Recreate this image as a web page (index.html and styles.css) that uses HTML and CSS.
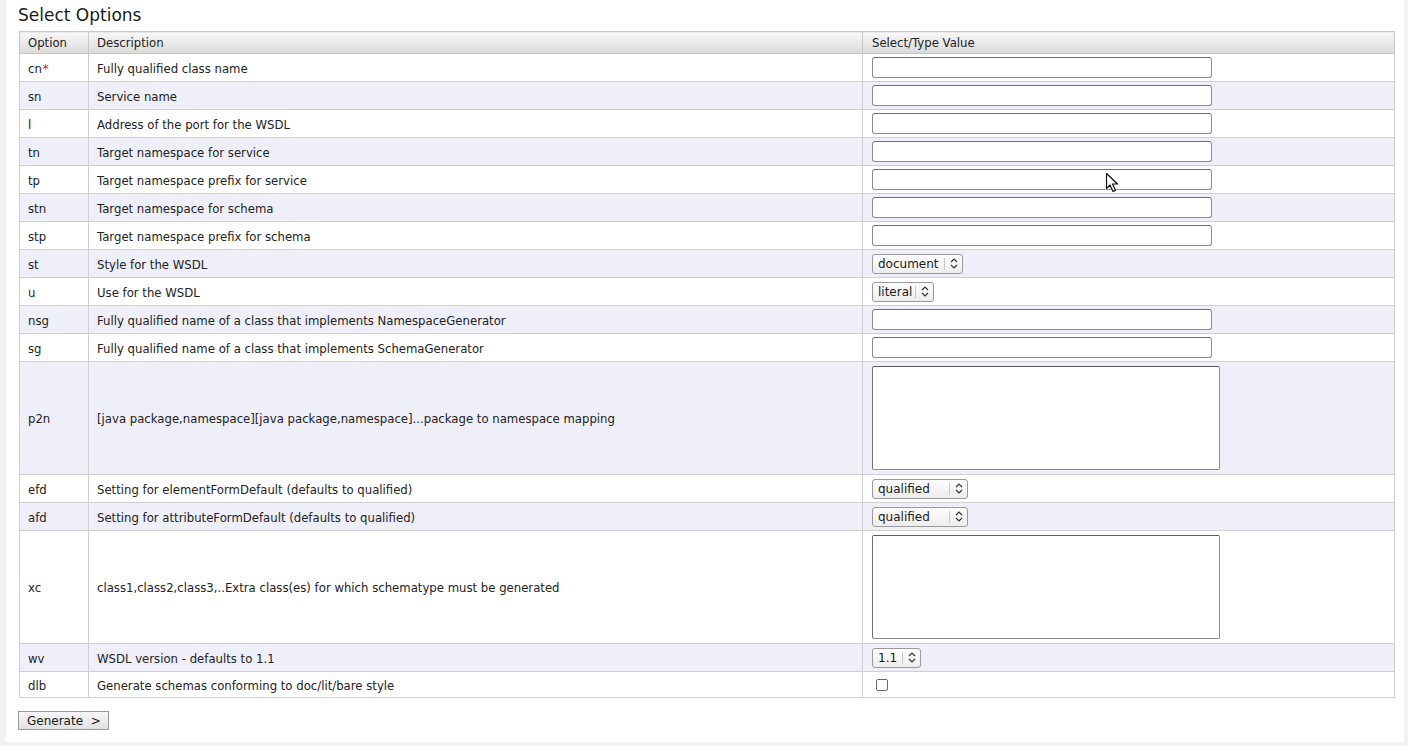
FILE: index.html
```html
<!DOCTYPE html>
<html>
<head>
<meta charset="utf-8">
<title>Select Options</title>
<link rel="stylesheet" href="styles.css">
</head>
<body>
<div class="panel">
  <h2 class="title">Select Options</h2>
  <table class="opts">
    <colgroup><col class="c-opt"><col class="c-desc"><col class="c-val"></colgroup>
    <thead>
      <tr><th>Option</th><th>Description</th><th class="val">Select/Type Value</th></tr>
    </thead>
    <tbody>
      <tr><td>cn<span class="req">*</span></td><td>Fully qualified class name</td><td class="val"><input class="txt" type="text"></td></tr>
      <tr class="alt"><td>sn</td><td>Service name</td><td class="val"><input class="txt" type="text"></td></tr>
      <tr><td>l</td><td>Address of the port for the WSDL</td><td class="val"><input class="txt" type="text"></td></tr>
      <tr class="alt"><td>tn</td><td>Target namespace for service</td><td class="val"><input class="txt" type="text"></td></tr>
      <tr><td>tp</td><td>Target namespace prefix for service</td><td class="val"><input class="txt" type="text"></td></tr>
      <tr class="alt"><td>stn</td><td>Target namespace for schema</td><td class="val"><input class="txt" type="text"></td></tr>
      <tr><td>stp</td><td>Target namespace prefix for schema</td><td class="val"><input class="txt" type="text"></td></tr>
      <tr class="alt"><td>st</td><td>Style for the WSDL</td><td class="val"><span class="sel w-doc"><span class="sel-t">document</span><span class="sel-a"><svg width="8" height="11" viewBox="0 0 8 11"><path d="M1 4 L4 1 L7 4 M1 7 L4 10 L7 7" fill="none" stroke="#333" stroke-width="1.2"/></svg></span></span></td></tr>
      <tr><td>u</td><td>Use for the WSDL</td><td class="val"><span class="sel w-lit"><span class="sel-t">literal</span><span class="sel-a"><svg width="8" height="11" viewBox="0 0 8 11"><path d="M1 4 L4 1 L7 4 M1 7 L4 10 L7 7" fill="none" stroke="#333" stroke-width="1.2"/></svg></span></span></td></tr>
      <tr class="alt"><td>nsg</td><td>Fully qualified name of a class that implements NamespaceGenerator</td><td class="val"><input class="txt" type="text"></td></tr>
      <tr><td>sg</td><td>Fully qualified name of a class that implements SchemaGenerator</td><td class="val"><input class="txt" type="text"></td></tr>
      <tr class="alt tall"><td>p2n</td><td>[java package,namespace][java package,namespace]...package to namespace mapping</td><td class="val"><textarea class="area"></textarea></td></tr>
      <tr><td>efd</td><td>Setting for elementFormDefault (defaults to qualified)</td><td class="val"><span class="sel w-q"><span class="sel-t">qualified</span><span class="sel-a"><svg width="8" height="11" viewBox="0 0 8 11"><path d="M1 4 L4 1 L7 4 M1 7 L4 10 L7 7" fill="none" stroke="#333" stroke-width="1.2"/></svg></span></span></td></tr>
      <tr class="alt"><td>afd</td><td>Setting for attributeFormDefault (defaults to qualified)</td><td class="val"><span class="sel w-q"><span class="sel-t">qualified</span><span class="sel-a"><svg width="8" height="11" viewBox="0 0 8 11"><path d="M1 4 L4 1 L7 4 M1 7 L4 10 L7 7" fill="none" stroke="#333" stroke-width="1.2"/></svg></span></span></td></tr>
      <tr class="tall"><td>xc</td><td>class1,class2,class3,..Extra class(es) for which schematype must be generated</td><td class="val"><textarea class="area"></textarea></td></tr>
      <tr class="alt"><td>wv</td><td>WSDL version - defaults to 1.1</td><td class="val"><span class="sel w-v"><span class="sel-t">1.1</span><span class="sel-a"><svg width="8" height="11" viewBox="0 0 8 11"><path d="M1 4 L4 1 L7 4 M1 7 L4 10 L7 7" fill="none" stroke="#333" stroke-width="1.2"/></svg></span></span></td></tr>
      <tr class="short"><td>dlb</td><td>Generate schemas conforming to doc/lit/bare style</td><td class="val"><span class="chk"></span></td></tr>
    </tbody>
  </table>
  <button class="gen" type="button">Generate &nbsp;&gt;</button>
</div>
<svg class="cursor" width="14" height="21" viewBox="0 0 14 21"><path d="M1.5 1.5 L1.5 16.5 L5 13 L8 19.5 L10.5 18.5 L7.5 12 L12.5 12 Z" fill="#fff" stroke="#000" stroke-width="1.1" stroke-linejoin="round"/></svg>
</body>
</html>
```
FILE: styles.css
```css
html, body {
  margin: 0;
  padding: 0;
}
body {
  background: #f2f2f2;
  font-family: "DejaVu Sans", Verdana, sans-serif;
  font-size: 11.7px;
  color: #222;
  position: relative;
  min-height: 746px;
}
.panel {
  margin-left: 6px;
  width: 1398px;
  box-sizing: border-box;
  background: #fff;
  padding: 5px 9px 12px 12px;
}
.title {
  margin: 0 0 6px 0;
  font-size: 17px;
  font-weight: normal;
  line-height: 20px;
  color: #1a1a1a;
}
.opts {
  margin-left: 1px;
  width: 1376px;
  border-collapse: collapse;
  table-layout: fixed;
  border: 1px solid #c4c4c4;
}
.c-opt { width: 69px; }
.c-desc { width: 774px; }
.opts th, .opts td {
  border: 1px solid #cfcfcf;
  padding: 0 8px;
  text-align: left;
  vertical-align: middle;
  font-weight: normal;
  white-space: nowrap;
}
.opts th {
  height: 21px;
  background: linear-gradient(#f8f8f8, #dadada);
  border-color: #c8c8c8;
}
.opts td { height: 27px; }
.opts tr.tall td { height: 112px; }
.opts tr.short td { height: 25px; }
.opts td.lbl { padding-top: 2px; }
.opts td:not(.val) { padding-top: 2px; height: 25px; }
.opts tr.tall td:not(.val) { height: 110px; }
.opts tr.short td:not(.val) { height: 23px; }
.opts th.val, .opts td.val { padding-left: 9px; }
.opts tr.alt td { background: #efeffa; }
.req { color: #e0161c; margin-left: 1px; }
.txt {
  display: block;
  box-sizing: border-box;
  width: 340px;
  height: 21px;
  margin: 0;
  border: 1px solid #8c8c8c;
  border-top-color: #6e6e6e;
  border-radius: 3px;
  background: #fff;
  padding: 0 4px;
  font: inherit;
}
.area {
  display: block;
  box-sizing: border-box;
  width: 348px;
  height: 104px;
  margin: 0;
  border: 1px solid #8c8c8c;
  border-top-color: #5e5e5e;
  border-left-color: #707070;
  border-radius: 2px;
  background: #fff;
  resize: none;
  font: inherit;
}
.sel {
  display: inline-flex;
  align-items: stretch;
  box-sizing: border-box;
  height: 20px;
  border: 1px solid #9a9a9a;
  border-radius: 3px;
  background: linear-gradient(#fdfdfd, #ededed);
  vertical-align: middle;
  color: #1a1a1a;
  font-size: 12px;
}
.sel-t {
  flex: 1;
  display: flex;
  align-items: center;
  padding-left: 5px;
  line-height: 18px;
}
.sel-a {
  width: 17px;
  display: flex;
  align-items: center;
  justify-content: center;
  border-left: 1px solid #c8c8c8;
  margin: 3px 0;
}
.w-doc { width: 91px; }
.w-lit { width: 62px; }
.w-q { width: 96px; }
.w-v { width: 49px; }
.chk {
  display: block;
  box-sizing: border-box;
  width: 12px;
  height: 12px;
  margin-left: 4px;
  border: 1px solid #6a6a6a;
  border-radius: 2px;
  background: #fff;
}
.gen {
  display: block;
  margin: 13px 0 0 0;
  box-sizing: border-box;
  width: 91px;
  height: 19px;
  padding: 0 0 0 8px;
  text-align: left;
  border: 1px solid #9a9a9a;
  border-radius: 0;
  background: linear-gradient(#f7f7f7, #e1e1e1);
  font: inherit;
  font-size: 12px;
  color: #1a1a1a;
  line-height: 16px;
}
.cursor {
  position: absolute;
  left: 1105px;
  top: 172px;
}
```
